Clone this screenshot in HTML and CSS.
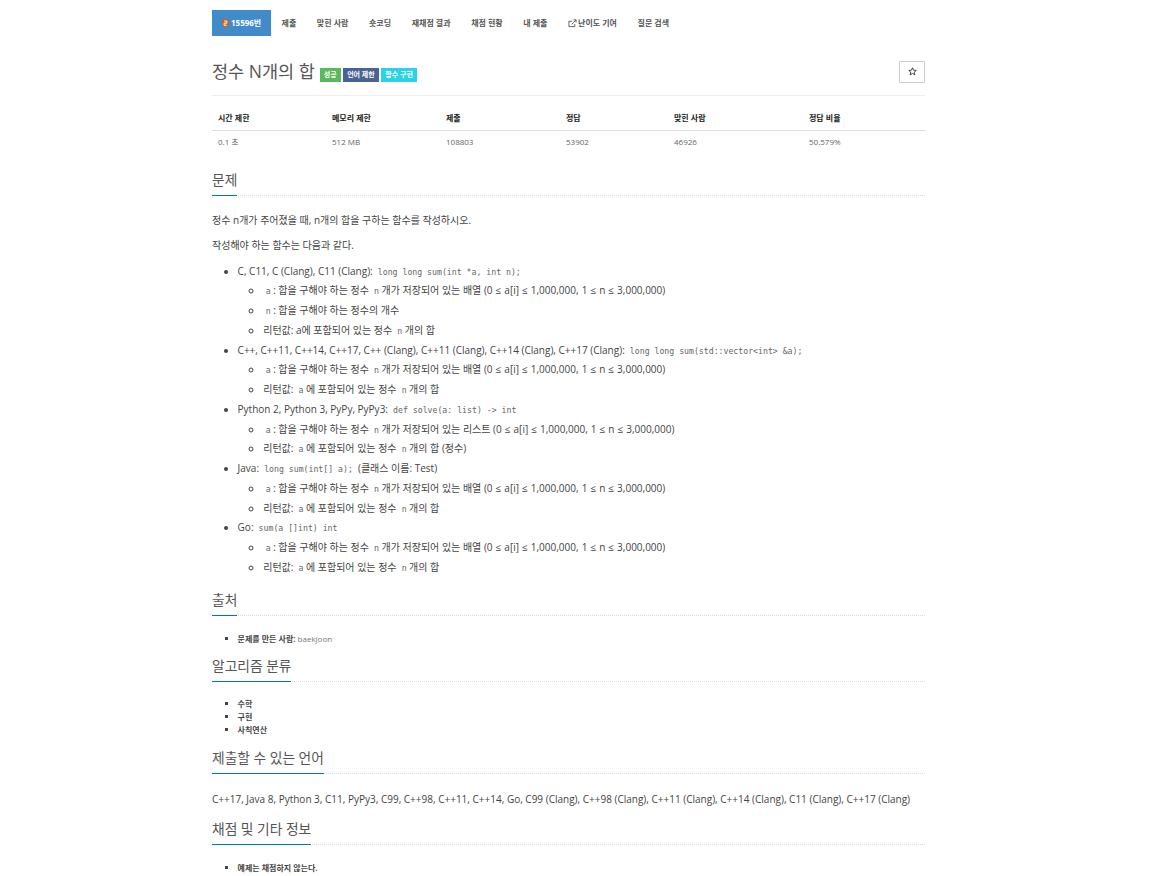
FILE: index.html
```html
<!DOCTYPE html>
<html lang="ko">
<head>
<meta charset="utf-8">
<title>정수 N개의 합</title>
<link rel="stylesheet" href="styles.css">
</head>
<body>
<main class="page">
  <nav class="tabs">
    <a class="tab active"><svg class="tier" viewBox="0 0 10 12" width="7" height="9"><path d="M0 0H10V9L5 12L0 9Z" fill="#c0651d"/><path d="M3 2.5H7V5.5H3V8.5H7" fill="none" stroke="#fff" stroke-width="1.3"/></svg>15596번</a>
    <a class="tab">제출</a>
    <a class="tab">맞힌 사람</a>
    <a class="tab">숏코딩</a>
    <a class="tab">재채점 결과</a>
    <a class="tab">채점 현황</a>
    <a class="tab">내 제출</a>
    <a class="tab"><svg class="ext" viewBox="0 0 10 10" width="9" height="9"><path d="M7.5 5.5V8.5H1V2.5H4.5M4 6L9 1M6 1H9V4" fill="none" stroke="#555" stroke-width="1"/></svg>난이도 기여</a>
    <a class="tab">질문 검색</a>
  </nav>

  <header class="title-row">
    <h1 class="title">정수 N개의 합</h1>
    <span class="label green">성공</span>
    <span class="label navy">언어 제한</span>
    <span class="label cyan">함수 구현</span>
    <button class="star" type="button"><svg viewBox="0 0 12 12" width="9" height="9"><path d="M6 1L7.4 4.3L11 4.6L8.3 6.9L9.1 10.5L6 8.6L2.9 10.5L3.7 6.9L1 4.6L4.6 4.3Z" fill="none" stroke="#333" stroke-width="1.2"/></svg></button>
  </header>

  <table class="info">
    <thead>
      <tr><th class="c1">시간 제한</th><th class="c2">메모리 제한</th><th class="c3">제출</th><th class="c4">정답</th><th class="c5">맞힌 사람</th><th class="c6">정답 비율</th></tr>
    </thead>
    <tbody>
      <tr><td>0.1 초</td><td>512 MB</td><td>108803</td><td>53902</td><td>46926</td><td>50.579%</td></tr>
    </tbody>
  </table>

  <section class="sec first">
    <div class="head"><h2>문제</h2></div>
    <div class="text">
      <p>정수 n개가 주어졌을 때, n개의 합을 구하는 함수를 작성하시오.</p>
      <p>작성해야 하는 함수는 다음과 같다.</p>
      <ul class="outer">
        <li>C, C11, C (Clang), C11 (Clang): <code>long long sum(int *a, int n);</code>
          <ul>
            <li><code>a</code>: 합을 구해야 하는 정수 <code>n</code>개가 저장되어 있는 배열 <span class="math">(0 ≤ a[i] ≤ 1,000,000, 1 ≤ n ≤ 3,000,000)</span></li>
            <li><code>n</code>: 합을 구해야 하는 정수의 개수</li>
            <li>리턴값: a에 포함되어 있는 정수 <code>n</code>개의 합</li>
          </ul>
        </li>
        <li>C++, C++11, C++14, C++17, C++ (Clang), C++11 (Clang), C++14 (Clang), C++17 (Clang): <code>long long sum(std::vector&lt;int&gt; &amp;a);</code>
          <ul>
            <li><code>a</code>: 합을 구해야 하는 정수 <code>n</code>개가 저장되어 있는 배열 <span class="math">(0 ≤ a[i] ≤ 1,000,000, 1 ≤ n ≤ 3,000,000)</span></li>
            <li>리턴값: <code>a</code>에 포함되어 있는 정수 <code>n</code>개의 합</li>
          </ul>
        </li>
        <li>Python 2, Python 3, PyPy, PyPy3: <code>def solve(a: list) -&gt; int</code>
          <ul>
            <li><code>a</code>: 합을 구해야 하는 정수 <code>n</code>개가 저장되어 있는 리스트 <span class="math">(0 ≤ a[i] ≤ 1,000,000, 1 ≤ n ≤ 3,000,000)</span></li>
            <li>리턴값: <code>a</code>에 포함되어 있는 정수 <code>n</code>개의 합 (정수)</li>
          </ul>
        </li>
        <li>Java: <code>long sum(int[] a);</code> (클래스 이름: Test)
          <ul>
            <li><code>a</code>: 합을 구해야 하는 정수 <code>n</code>개가 저장되어 있는 배열 <span class="math">(0 ≤ a[i] ≤ 1,000,000, 1 ≤ n ≤ 3,000,000)</span></li>
            <li>리턴값: <code>a</code>에 포함되어 있는 정수 <code>n</code>개의 합</li>
          </ul>
        </li>
        <li>Go: <code>sum(a []int) int</code>
          <ul>
            <li><code>a</code>: 합을 구해야 하는 정수 <code>n</code>개가 저장되어 있는 배열 <span class="math">(0 ≤ a[i] ≤ 1,000,000, 1 ≤ n ≤ 3,000,000)</span></li>
            <li>리턴값: <code>a</code>에 포함되어 있는 정수 <code>n</code>개의 합</li>
          </ul>
        </li>
      </ul>
    </div>
  </section>

  <section class="sec wide">
    <div class="head"><h2>출처</h2></div>
    <ul class="small">
      <li>문제를 만든 사람: <a class="link">baekjoon</a></li>
    </ul>
  </section>

  <section class="sec tight">
    <div class="head"><h2>알고리즘 분류</h2></div>
    <ul class="small algo">
      <li>수학</li>
      <li>구현</li>
      <li>사칙연산</li>
    </ul>
  </section>

  <section class="sec">
    <div class="head"><h2>제출할 수 있는 언어</h2></div>
    <p class="langs">C++17, Java 8, Python 3, C11, PyPy3, C99, C++98, C++11, C++14, Go, C99 (Clang), C++98 (Clang), C++11 (Clang), C++14 (Clang), C11 (Clang), C++17 (Clang)</p>
  </section>

  <section class="sec">
    <div class="head"><h2>채점 및 기타 정보</h2></div>
    <ul class="small">
      <li>예제는 채점하지 않는다.</li>
    </ul>
  </section>
</main>
</body>
</html>
```
FILE: styles.css
```css
* { box-sizing: border-box; }
html, body { margin: 0; padding: 0; background: #fff; }
body {
  font-family: "Open Sans", "Noto Sans CJK KR", sans-serif;
  font-size: 8px;
  line-height: 1.43;
  color: #444;
  height: 876px;
  overflow: hidden;
}
.page { width: 713px; margin-left: 212px; padding-top: 10px; }

.tabs { display: flex; height: 26px; align-items: stretch; }
.tab {
  display: flex;
  align-items: center;
  padding: 0 10.3px;
  font-weight: 600;
  font-size: 8px;
  color: #555;
  white-space: nowrap;
}
.tab.active { padding: 0 10px; background: #428bca; color: #fff; font-weight: 700; }
.tier { margin-right: 2px; }
.ext { margin-right: 1px; }

.title-row {
  display: flex;
  align-items: center;
  height: 60px;
  border-bottom: 1px solid #eee;
  padding-top: 10px;
}
.title { margin: 0 5px 0 0; font-size: 17.5px; font-weight: 400; line-height: 24px; color: #555; }
.label {
  display: inline-block;
  margin: 8px 2.5px 0 0;
  padding: 0 4px;
  height: 14px;
  line-height: 14px;
  font-size: 7px;
  font-weight: 700;
  color: #fff;
}
.green { background: #5cb85c; }
.navy { background: #4a6394; }
.cyan { background: #29d2e4; }
.star {
  margin: 2px 0 0 auto;
  width: 26px;
  height: 22px;
  padding: 0;
  background: #fff;
  border: 1px solid #ccc;
  display: flex;
  align-items: center;
  justify-content: center;
}

.info { width: 100%; border-collapse: collapse; table-layout: fixed; margin-top: 10px; }
.info th, .info td { text-align: left; padding: 0 6px; height: 24px; font-size: 8px; }
.info td { height: 25px; padding-bottom: 2px; color: #666; }
.info th { font-weight: 600; color: #222; border-bottom: 1px solid #ddd; }
.c1, .c2 { width: 114px; }
.c3 { width: 120px; }
.c4 { width: 108px; }
.c5 { width: 135px; }

.sec { margin-top: 12px; }
.sec.first { margin-top: 15px; }
.sec.wide { margin-top: 15px; }
.sec.tight { margin-top: 11px; }
.head { border-bottom: 1px dotted #ddd; height: 26px; display: flex; }
.head h2 {
  margin: 0;
  height: 26px;
  font-size: 13.75px;
  line-height: 20px;
  font-weight: 400;
  color: #555;
  border-bottom: 1px solid #0076c0;
}

.text { font-size: 10px; line-height: 16px; color: #444; padding-top: 16px; }
.text p { margin: 0 0 9.3px; }
.text ul { margin: 0; padding-left: 25.6px; }
.text li { margin-top: 3.75px; }
.outer { list-style: disc; }
.outer ul { list-style: circle; }
code {
  font-family: "DejaVu Sans Mono", "Liberation Mono", monospace;
  font-size: 8.2px;
  line-height: 1;
  color: #666;
  padding: 0 2.5px;
}
.math { word-spacing: 0.45px; }

.small { margin: 0; padding: 16px 0 0 25.6px; list-style: square; font-size: 8px; line-height: 13px; font-weight: 600; color: #444; }
.small.algo { padding-top: 15px; }
.link { color: #777; font-weight: 400; }
.langs { margin: 0; padding-top: 17px; font-size: 10px; line-height: 16px; }
```
